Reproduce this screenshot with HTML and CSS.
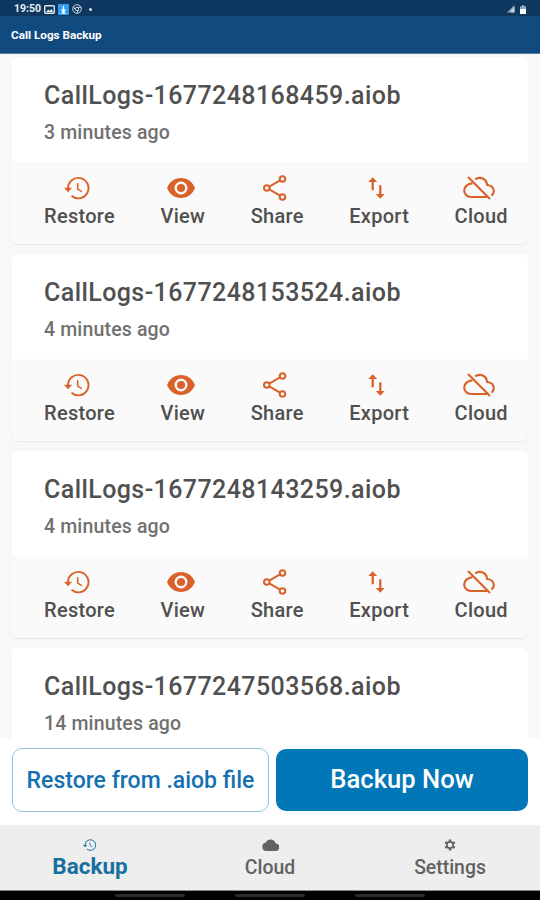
FILE: index.html
```
<!DOCTYPE html>
<html lang="en">
  <head>
    <title>Call Logs Backup</title>
    <meta charset="UTF-8" />
    <meta name="viewport" content="width=device-width, initial-scale=1.0" />
    <link rel="stylesheet" href="styles.css" />
  </head>
  <body>
    <!-- icons used more than once -->
    <svg class="icon-defs" width="0" height="0">
      <symbol id="restore" viewBox="0 0 28 24">
        <path d="M4.2 12.5a10.6 10.6 0 1 1 3.6 7.6" fill="none" stroke="currentColor" stroke-width="2" />
        <path d="M0 11.8h8.4l-4.2 4.6z" fill="currentColor" />
        <path d="M14.2 7v6.2l4.3 2.5" fill="none" stroke="currentColor" stroke-width="1.6" />
      </symbol>
      <symbol id="view" viewBox="0 0 28 20">
        <path d="M14 0C7.600 0 2.200 4.100 0 10c2.200 5.900 7.600 10 14 10s11.800-4.100 14-10C25.800 4.100 20.400 0 14 0z" fill="currentColor" />
        <circle cx="14" cy="10" r="5.300" fill="none" stroke="#fafafa" stroke-width="2.400" />
      </symbol>
      <symbol id="share" viewBox="0 0 24 26">
        <g fill="none" stroke="currentColor" stroke-width="2">
          <circle cx="3.800" cy="13" r="2.800" />
          <circle cx="19.500" cy="4" r="2.800" />
          <circle cx="19.500" cy="22" r="2.800" />
          <path d="M6.300 11.600 17 5.400M6.300 14.400 17 20.600" />
        </g>
      </symbol>
      <symbol id="export" viewBox="0 0 18 24">
        <path d="M5 14.500V3M13 9v12" fill="none" stroke="currentColor" stroke-width="2.400" />
        <path d="M0.300 5.700 5 0.600l4.700 5.100zM8.300 18.300l4.700 5.100 4.700-5.100z" fill="currentColor" />
      </symbol>
      <symbol id="cloud-off" viewBox="0 0 32 24">
        <g fill="none" stroke="currentColor" stroke-width="2.200">
          <path d="M5 1 27 23" />
          <path d="M9.500 7.300C4.500 7.500 1.200 10.800 1.200 14.500c0 3.700 3 6.500 6.800 6.500h16" />
          <path d="M12.200 3.200c5-3.200 11.300-.6 12 5.800 3.700.3 6.600 2.600 6.600 6.100 0 1.800-.8 3.500-2.300 4.600" />
        </g>
      </symbol>
    </svg>

    <header>
      <div class="status-bar">
        <span class="time">19:50</span>
        <svg width="11" height="9" viewBox="0 0 11 9">
          <rect x="0.700" y="0.700" width="9.600" height="7.600" rx="1" fill="none" stroke="#dfe7ef" stroke-width="1.400" />
          <path d="M2 7l2.300-2.500 1.500 1.300L7.500 4 9.300 7z" fill="#dfe7ef" />
        </svg>
        <svg width="11" height="11" viewBox="0 0 11 11">
          <rect width="11" height="11" rx="1" fill="#2f9df4" />
          <path d="M5.500 2v5M3.500 5.500l2 2.300 2-2.300M3.500 9h4" fill="none" stroke="#fff" stroke-width="1.300" />
        </svg>
        <svg width="10" height="10" viewBox="0 0 10 10" fill="none" stroke="#c5d2df">
          <circle cx="5" cy="5" r="4.300" />
          <circle cx="5" cy="5" r="1.700" />
          <path d="M5 3.300h4M3.600 6 1.300 2.800M6.500 6 4.700 9.200" />
        </svg>
        <span class="dot"></span>
        <svg class="signal" width="8" height="8" viewBox="0 0 8 8">
          <path d="M7.500 0v7.500H0z" fill="#8ea5bb" />
          <path d="M7.500 2v5.500H4V5.500z" fill="#c3d0dd" />
        </svg>
        <svg width="6" height="9" viewBox="0 0 6 9">
          <path d="M2 0h2v1.300h2V9H0V1.300h2z" fill="#91a7bd" />
          <path d="M0 4h6v5H0z" fill="#fff" />
        </svg>
      </div>
      <h1>Call Logs Backup</h1>
    </header>

    <main id="backupList"></main>

    <div class="buttons">
      <button class="restore-file">Restore from .aiob file</button>
      <button class="backup-now">Backup Now</button>
    </div>

    <nav>
      <a class="active">
        <svg width="14" height="12"><use href="#restore" /></svg>
        <span>Backup</span>
      </a>
      <a>
        <svg width="17" height="11" viewBox="0 0 17 12">
          <path d="M13.700 4.600A5.300 5.300 0 0 0 3.800 3.500 4.300 4.300 0 0 0 4.200 12h9.200a3.700 3.700 0 0 0 .3-7.400z" fill="currentColor" />
        </svg>
        <span>Cloud</span>
      </a>
      <a>
        <svg width="14" height="14" viewBox="0 0 14 14" fill="none" stroke="currentColor">
          <circle cx="7" cy="7" r="3.700" stroke-width="2" />
          <path d="M7 .6v2M7 11.400v2M1.450 3.800l1.750 1M10.800 9.200l1.750 1M1.450 10.200l1.750-1M10.800 4.800l1.750-1" stroke-width="2.800" />
        </svg>
        <span>Settings</span>
      </a>
    </nav>

    <div class="system-bar">
      <span></span>
      <span></span>
      <span></span>
    </div>

    <script>
      const backups = [
        { name: "CallLogs-1677248168459.aiob", time: "3 minutes ago" },
        { name: "CallLogs-1677248153524.aiob", time: "4 minutes ago" },
        { name: "CallLogs-1677248143259.aiob", time: "4 minutes ago" },
        { name: "CallLogs-1677247503568.aiob", time: "14 minutes ago" },
      ];

      const actions = [
        { icon: "restore", label: "Restore" },
        { icon: "view", label: "View" },
        { icon: "share", label: "Share" },
        { icon: "export", label: "Export" },
        { icon: "cloud-off", label: "Cloud" },
      ];

      const list = document.getElementById("backupList");
      for (const backup of backups) {
        const card = document.createElement("article");
        card.classList.add("card");
        card.innerHTML = `
          <div class="card-head">
            <h2>${backup.name}</h2>
            <p>${backup.time}</p>
          </div>
          <div class="card-actions">
            ${actions
              .map(
                (a) =>
                  `<a><svg class="icon ${a.icon}"><use href="#${a.icon}" /></svg><span>${a.label}</span></a>`
              )
              .join("")}
          </div>`;
        list.appendChild(card);
      }
    </script>
  </body>
</html>
```

FILE: styles.css
```
* {
  box-sizing: border-box;
}

body {
  margin: 0;
  height: 900px;
  display: flex;
  flex-direction: column;
  overflow: hidden;
  font-family: Roboto, "Liberation Sans", sans-serif;
  font-weight: 500;
  color: #505050;
  background-color: #fff;
}

h1,
h2,
p {
  margin: 0;
  font-weight: 500;
}

.icon-defs {
  position: absolute;
}

header {
  height: 54px;
  flex-shrink: 0;
  color: #fff;
  background-color: #114a7f;
  border-bottom: 1px solid #557fa5;
}

.status-bar {
  height: 16px;
  display: flex;
  align-items: center;
  gap: 3px;
  padding: 2px 14px 0 14px;
  background-color: #0e3860;
}

.time {
  font-size: 10.5px;
  font-weight: 700;
  line-height: 12px;
  color: #e8eef4;
}

.dot {
  width: 3px;
  height: 3px;
  margin-left: 4px;
  border-radius: 50%;
  background-color: #dfe7ef;
}

.signal {
  margin-left: auto;
  margin-right: 2px;
}

h1 {
  padding-left: 11px;
  font-size: 11.7px;
  font-weight: 700;
  line-height: 38px;
}

main {
  height: 684px;
  flex-shrink: 0;
  display: flex;
  flex-direction: column;
  gap: 10px;
  padding: 3px 12px 0;
  overflow: hidden;
  background-color: #f8f8f8;
}

.card {
  height: 187px;
  flex-shrink: 0;
  border-radius: 6px;
  background-color: #fafafa;
  box-shadow: 0 1px 1px #e9e9e9;
}

.card-head {
  height: 105px;
  padding: 24px 32px 0;
  border-radius: 6px 6px 0 0;
  background-color: #fff;
}

.card-head h2 {
  font-size: 25px;
  line-height: 30px;
  letter-spacing: 0.42px;
}

.card-head p {
  margin-top: 10px;
  font-size: 19.5px;
  line-height: 24px;
  letter-spacing: 0.15px;
  color: #717171;
}

.card-actions {
  display: flex;
  justify-content: space-between;
  padding: 12px 20px 0 32px;
}

/* the last card is cut by the bottom buttons */
.card:last-child .card-actions {
  display: none;
}

.card-actions a {
  display: flex;
  flex-direction: column;
  align-items: center;
}

.card-actions span {
  margin-top: 2px;
  font-size: 20px;
  line-height: 24px;
  letter-spacing: 0.3px;
}

.icon {
  height: 28px;
  margin-right: 4px;
  color: #d9622b;
}

.icon.restore {
  width: 27px;
  padding: 2px 0;
}

.icon.view {
  width: 28px;
  padding: 4px 0;
}

.icon.share {
  width: 24px;
}

.icon.export {
  width: 17px;
  margin-right: 6px;
}

.icon.cloud-off {
  width: 32px;
  margin-right: 5px;
}

.buttons {
  height: 87px;
  flex-shrink: 0;
  display: flex;
  gap: 7px;
  padding: 10px 12px 13px;
}

.buttons button {
  border-radius: 10px;
  font-family: inherit;
}

.restore-file {
  width: 257px;
  padding: 0;
  border: 1px solid #8fbfdb;
  font-size: 23px;
  font-weight: 500;
  color: #1470b0;
  background-color: #fff;
}

.backup-now {
  flex: 1;
  margin: 1px 0;
  padding: 0 0 2px;
  border: none;
  font-size: 25.6px;
  font-weight: 500;
  color: #fff;
  background-color: #0277b7;
}

nav {
  height: 66px;
  flex-shrink: 0;
  display: flex;
  background-color: #eee;
  border-bottom: 1px solid #888;
}

nav a {
  flex: 1;
  display: flex;
  flex-direction: column;
  align-items: center;
  padding-top: 14px;
  color: #626262;
}

nav svg {
  height: 12px;
}

nav span {
  margin-top: 5px;
  font-size: 19.4px;
  line-height: 24px;
}

nav .active {
  color: #16709f;
}

nav .active span {
  margin-top: 3px;
  font-size: 22.5px;
  font-weight: 700;
}

.system-bar {
  height: 9px;
  display: flex;
  justify-content: center;
  gap: 50px;
  padding-top: 3px;
  background-color: #000;
}

.system-bar span {
  width: 70px;
  height: 3px;
  border-radius: 2px;
  background-color: #2b2b2b;
}
```
